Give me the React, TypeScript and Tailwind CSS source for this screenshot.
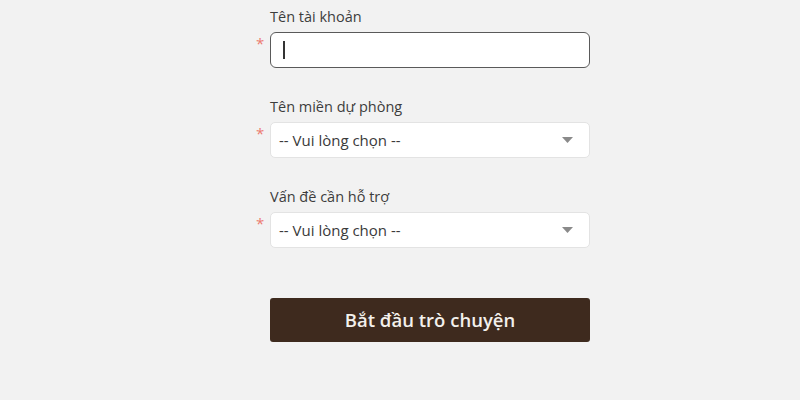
import React from 'react';

const font = { fontFamily: '"Open Sans", "Noto Sans", sans-serif' };

function Caret() {
  return (
    <svg width="11" height="6" viewBox="0 0 11 6" className="shrink-0">
      <path d="M0 0 L11 0 L5.5 6 Z" fill="#8a8a8a" />
    </svg>
  );
}

function Field({ label, children }: { label: string; children: React.ReactNode }) {
  return (
    <div className="flex flex-col">
      <div className="pl-[15px] h-[20px] leading-[20px] text-[14.5px] text-[#3d3d3d]">{label}</div>
      <div className="flex mt-[5px]">
        <span className="w-[15px] pl-[1px] pt-[1px] text-[15px] leading-[20px] text-[#ec7a6f]">*</span>
        {children}
      </div>
    </div>
  );
}

function SelectBox() {
  return (
    <div className="w-[320px] h-[36px] flex items-center justify-between pl-[8px] pr-[16px] bg-white border border-[#e3e3e3] rounded-[5px] text-[15px] text-[#3a3a3a]">
      <span>-- Vui lòng chọn --</span>
      <Caret />
    </div>
  );
}

export default function App() {
  return (
    <div className="w-[800px] h-[400px] bg-[#f2f2f2] overflow-hidden" style={font}>
      <div className="ml-[255px] w-[335px] pt-[7px] flex flex-col gap-[29px]">
        <Field label="Tên tài khoản">
          <div className="w-[320px] h-[36px] flex items-center pl-[12px] bg-white border-[1.5px] border-[#5a5a5a] rounded-[6px]">
            <span className="w-[1.5px] h-[18px] bg-[#333]" />
          </div>
        </Field>
        <Field label="Tên miền dự phòng">
          <SelectBox />
        </Field>
        <Field label="Vấn đề cần hỗ trợ">
          <SelectBox />
        </Field>
        <div className="pl-[15px] mt-[21px]">
          <button className="w-[320px] h-[44px] bg-[#3e2a1e] rounded-[3px] text-[#f3f0ec] text-[18.5px] font-semibold">
            Bắt đầu trò chuyện
          </button>
        </div>
      </div>
    </div>
  );
}
